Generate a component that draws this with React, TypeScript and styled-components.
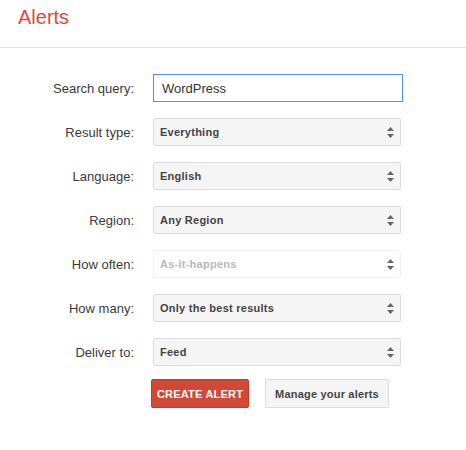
import React from "react";
import styled, { createGlobalStyle } from "styled-components";

const Global = createGlobalStyle`
  html, body { margin: 0; padding: 0; background: #fff; }
  body { font-family: Arial, "Liberation Sans", sans-serif; color: #333; }
`;

const Header = styled.header`
  height: 47px;
  border-bottom: 1px solid #e5e5e5;
  padding-left: 18px;
  display: flex;
  align-items: flex-start;
`;

const Title = styled.h1`
  margin: 0;
  padding-top: 5px;
  font-size: 20px;
  font-weight: normal;
  color: #dd4b39;
  line-height: 24px;
`;

const Form = styled.form`
  padding-top: 26px;
  display: grid;
  grid-template-columns: 134px 250px;
  column-gap: 19px;
  row-gap: 16px;
  align-items: center;
`;

const Label = styled.label`
  text-align: right;
  font-size: 13px;
  color: #3a3a3a;
`;

const Input = styled.input`
  box-sizing: border-box;
  width: 250px;
  height: 28px;
  border: 1px solid #4d90fe;
  padding: 0 8px;
  font-family: Arial, "Liberation Sans", sans-serif;
  font-size: 13px;
  color: #333;
  outline: none;
  margin: 0;
`;

const SelectBox = styled.div<{ $disabled?: boolean }>`
  box-sizing: border-box;
  width: 248px;
  height: 28px;
  border: 1px solid ${(p) => (p.$disabled ? "#f1f1f1" : "#dcdcdc")};
  border-radius: 2px;
  background: ${(p) => (p.$disabled ? "#fff" : "#f5f5f5")};
  display: flex;
  align-items: center;
  justify-content: space-between;
  padding: 0 6px 0 6px;
  font-size: 11px;
  font-weight: bold;
  letter-spacing: 0.25px;
  color: ${(p) => (p.$disabled ? "#b8b8b8" : "#444")};
`;

const Buttons = styled.div`
  grid-column: 2;
  display: flex;
  gap: 16px;
  margin-left: -2px;
  margin-top: -3px;
`;

const Button = styled.button<{ $primary?: boolean }>`
  box-sizing: border-box;
  height: 29px;
  padding: 0;
  white-space: nowrap;
  border-radius: 2px;
  border: 1px solid ${(p) => (p.$primary ? "#c6392a" : "#dcdcdc")};
  background: ${(p) => (p.$primary ? "#d14836" : "#f5f5f5")};
  color: ${(p) => (p.$primary ? "#fff" : "#444")};
  font-family: Arial, "Liberation Sans", sans-serif;
  font-size: 11px;
  font-weight: bold;
  letter-spacing: 0.2px;
  width: ${(p) => (p.$primary ? "98px" : "124px")};
`;

const Arrows = () => (
  <svg width="7" height="11" viewBox="0 0 7 11">
    <path d="M3.5 0 L7 4 L0 4 Z M0 7 L7 7 L3.5 11 Z" fill="#666" />
  </svg>
);

const Select = ({ value, disabled }: { value: string; disabled?: boolean }) => (
  <SelectBox $disabled={disabled}>
    <span>{value}</span>
    <Arrows />
  </SelectBox>
);

const rows: { label: string; value: string; disabled?: boolean }[] = [
  { label: "Result type:", value: "Everything" },
  { label: "Language:", value: "English" },
  { label: "Region:", value: "Any Region" },
  { label: "How often:", value: "As-it-happens", disabled: true },
  { label: "How many:", value: "Only the best results" },
  { label: "Deliver to:", value: "Feed" },
];

export default function App() {
  return (
    <>
      <Global />
      <Header>
        <Title>Alerts</Title>
      </Header>
      <Form onSubmit={(e) => e.preventDefault()}>
        <Label>Search query:</Label>
        <Input defaultValue="WordPress" />
        {rows.map((r) => (
          <React.Fragment key={r.label}>
            <Label>{r.label}</Label>
            <Select value={r.value} disabled={r.disabled} />
          </React.Fragment>
        ))}
        <Buttons>
          <Button $primary type="button">CREATE ALERT</Button>
          <Button type="button">Manage your alerts</Button>
        </Buttons>
      </Form>
    </>
  );
}
